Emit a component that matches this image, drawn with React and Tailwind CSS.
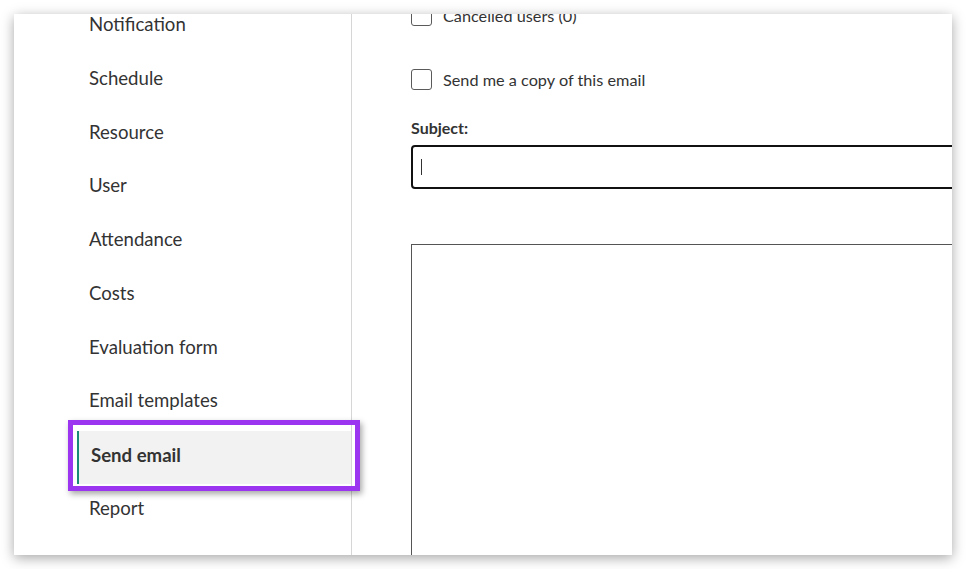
const navItems = [
  "Notification",
  "Schedule",
  "Resource",
  "User",
  "Attendance",
  "Costs",
  "Evaluation form",
  "Email templates",
  "Send email",
  "Report",
];

function Checkbox({ label, className = "" }) {
  return (
    <label className={`flex items-center ${className}`}>
      <span className="block w-[21px] h-[21px] shrink-0 border-[1.5px] border-[#5a5a5a] rounded-[3px] bg-white" />
      <span className="ml-[11px] text-[16.25px] leading-[21px] text-[#333]">{label}</span>
    </label>
  );
}

export default function App() {
  const active = "Send email";

  return (
    <div className="w-[966px] h-[569px] bg-white p-[14px] font-['Lato','Open_Sans',sans-serif]">
      <div className="relative w-[938px] h-[541px] bg-white overflow-hidden flex shadow-[0_3px_12px_rgba(0,0,0,0.35)]">
        {/* sidebar */}
        <aside className="w-[338px] shrink-0 h-full border-r border-[#d6d6d6]">
          <ul className="mt-[-13px] pl-[63px]">
            {navItems.map((item) => {
              const isActive = item === active;
              return (
                <li
                  key={item}
                  className={`h-[53.7px] flex items-center text-[18.6px] text-[#333] pl-[12px] ${
                    isActive ? "bg-[#f2f2f2] border-l-[2px] border-[#1a8a78] font-bold" : ""
                  }`}
                >
                  <span className={isActive ? "-mt-[3px]" : "-mt-[5px]"}>{item}</span>
                </li>
              );
            })}
          </ul>
        </aside>

        {/* content */}
        <main className="flex-1 pl-[59px] min-w-0">
          <Checkbox label="Cancelled users (0)" className="mt-[-9px]" />
          <Checkbox label="Send me a copy of this email" className="mt-[43px]" />

          <div className="mt-[29px] text-[16px] font-bold text-[#333] leading-[18px]">Subject:</div>
          <div className="mt-[8px] w-[700px] h-[44px] border-[2px] border-[#111] rounded-[4px] flex items-center pl-[8px]">
            <span className="block w-px h-[16px] bg-[#333]" />
          </div>

          <div className="mt-[55px] w-[700px] h-[400px] border border-[#555]" />
        </main>

        {/* highlight annotation */}
        <div className="absolute left-[54px] top-[406px] w-[292px] h-[71px] border-[5px] border-[#9b35f0] shadow-[2px_3px_6px_rgba(0,0,0,0.35)]" />
      </div>
    </div>
  );
}
